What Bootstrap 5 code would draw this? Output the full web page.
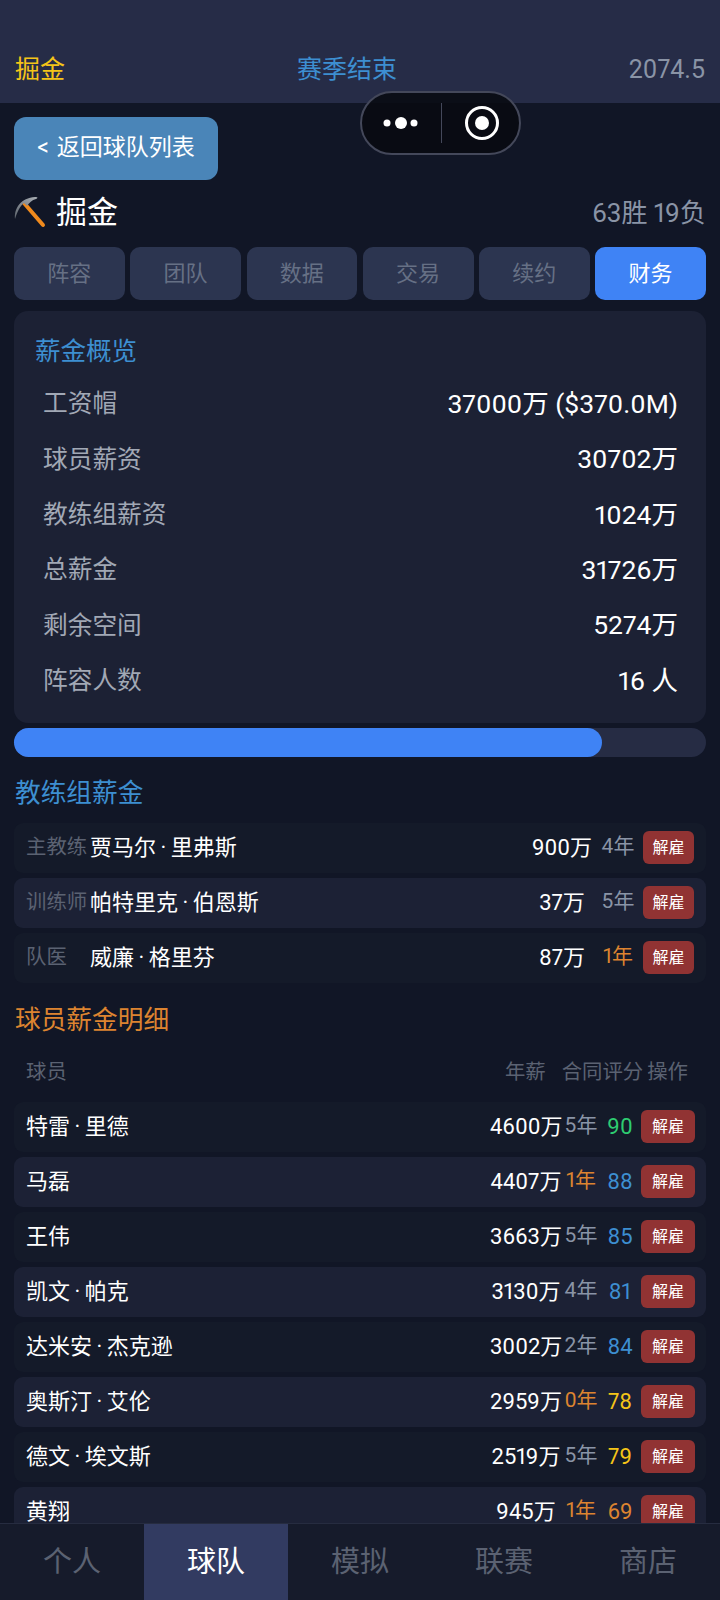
<!DOCTYPE html>
<html lang="zh">
<head>
<meta charset="UTF-8">
<meta name="viewport" content="width=device-width, initial-scale=1">
<title>球队财务</title>
<link href="https://cdn.jsdelivr.net/npm/bootstrap@5.3.0/dist/css/bootstrap.min.css" rel="stylesheet">
<style>
body { background: #111626; color: #fff; font-family: Roboto, "Noto Sans CJK SC", sans-serif; font-variant-numeric: proportional-nums; width: 720px; height: 1600px; overflow: hidden; }
.top-bar { background: #262c47; height: 103px; padding: 0 15px 15px; font-size: 25px; line-height: 36px; }
.tone-gold { color: #f5c518; }
.tone-blue { color: #3d8fd1; }
.tone-gray { color: #8a94a6; }
.tone-orange { color: #dd8430; }
.tone-green { color: #2ecc71; }
.capsule { position: absolute; left: 360px; top: 91px; width: 161px; height: 64px; background: rgba(8, 10, 17, .88); border: 2px solid #44485a; border-radius: 32px; }
.capsule-part { width: 79px; flex: none; }
.capsule-line { width: 1px; height: 40px; background: #44485a; flex: none; }
.page-body { padding: 14px 14px 0; }
.back-btn { width: 204px; height: 63px; background: #4a85b8; border: 0; border-radius: 12px; color: #fff; font-size: 23px; padding: 0; word-spacing: 2px; }
.team-row { height: 67px; }
.team-gap { gap: 10px; }
.team-icon { margin-bottom: 4px; }
.team-name { font-size: 31px; }
.team-record { font-size: 26px; }
.tab-strip { gap: 5.5px; }
.tab-btn { flex: 1 1 0; height: 53px; line-height: 53px; background: #2c3550; color: #667085; font-size: 22px; text-align: center; border-radius: 10px; }
.tab-btn.is-on { background: #3f83f5; color: #fff; }
.money-card { background: #1c2134; border-radius: 14px; height: 412px; margin-top: 11px; padding: 22px 28px 0 21px; }
.money-card h3 { font-size: 25.5px; font-weight: 400; line-height: 36px; margin: 0 0 7px; }
.money-line { height: 55.4px; padding-left: 8px; }
.money-line .lbl { color: #a1a8b5; font-size: 24.7px; }
.money-line .val { font-size: 26.5px; }
.cap-bar { height: 29px; margin-top: 5px; background: #262c44; border-radius: 15px; }
.cap-fill { height: 29px; background: #3f83f5; border-radius: 15px; }
.sec-title { font-size: 25.7px; font-weight: 400; line-height: 36px; margin: 18px 0 12px 1px; }
.sec-title.is-players { margin-top: 19px; margin-bottom: 0; }
.pay-row { height: 50px; margin-bottom: 5px; padding: 0 12px 2px; border-radius: 9px; background: #141a29; font-size: 22px; }
.pay-row.is-alt { background: #1c2135; }
.player-row { padding-right: 11px; }
.name-dot { margin: 0 4.5px; }
.coach-role { width: 64px; font-size: 20.4px; color: #5b6272; white-space: nowrap; }
.fire-tag { background: #913333; color: #fff; font-size: 16px; border-radius: 6px; height: 33px; line-height: 33px; text-align: center; width: 54px; margin-left: 1px; flex: none; }
.coach-row .fire-tag { width: 51px; margin-left: 0; }
.col-pay { width: 72px; text-align: center; white-space: nowrap; }
.col-term { width: 38px; text-align: center; white-space: nowrap; font-size: 21px; }
.col-rate { width: 40px; text-align: center; }
.coach-pay { width: 72px; text-align: center; }
.coach-term { width: 40px; text-align: center; margin-right: 5px; font-size: 21px; }
.head-row { height: 51px; margin-top: 9px; padding: 0 18px 0 12px; font-size: 20.4px; color: #5b6272; }
.player-list { margin-top: 4px; }
.tab-foot { position: fixed; left: 0; right: 0; bottom: 0; height: 77px; background: #161b2b; border-top: 1px solid #262c40; }
.foot-item { flex: 1 1 0; text-align: center; line-height: 76px; font-size: 29px; color: #5b6272; }
.foot-item.is-on { background: #323b61; color: #fff; }
</style>
</head>
<body>

<div class="top-bar d-flex align-items-end justify-content-between">
  <span class="tone-gold">掘金</span>
  <span class="tone-blue">赛季结束</span>
  <span class="tone-gray">2074.5</span>
</div>

<div class="capsule d-flex align-items-center">
  <svg class="capsule-part" height="16" viewBox="0 0 79 16"><circle cx="25" cy="8" r="3.5" fill="#fff"/><circle cx="39" cy="8" r="6" fill="#fff"/><circle cx="52" cy="8" r="3.5" fill="#fff"/></svg>
  <div class="capsule-line"></div>
  <svg class="capsule-part" height="36" viewBox="0 0 79 36"><circle cx="40" cy="18" r="15.5" fill="none" stroke="#fff" stroke-width="3"/><circle cx="40" cy="18" r="7" fill="#fff"/></svg>
</div>

<div class="page-body">
  <button class="back-btn d-block" type="button">&lt; 返回球队列表</button>

  <div class="team-row d-flex align-items-center justify-content-between">
    <div class="d-flex align-items-center team-gap">
      <svg class="team-icon" width="32" height="32" viewBox="0 0 32 32">
        <defs><linearGradient id="pickHead" x1="0" y1="1" x2="1" y2="0"><stop offset="0" stop-color="#5f666e"/><stop offset="1" stop-color="#a8adb3"/></linearGradient></defs>
        <path d="M10 7 L29 29" stroke="#f08a1d" stroke-width="4" stroke-linecap="round"/>
        <path d="M1 23 C0 12 7 2 21 1 C24 1 24 2 22 3 C18 4 15 7 13 10 L10 7 C6 10 3 16 1 23 Z" fill="url(#pickHead)"/>
      </svg>
      <span class="team-name">掘金</span>
    </div>
    <span class="team-record tone-gray">63胜 19负</span>
  </div>

  <div class="d-flex tab-strip">
    <div class="tab-btn">阵容</div>
    <div class="tab-btn">团队</div>
    <div class="tab-btn">数据</div>
    <div class="tab-btn">交易</div>
    <div class="tab-btn">续约</div>
    <div class="tab-btn is-on">财务</div>
  </div>

  <div class="money-card">
    <h3 class="tone-blue">薪金概览</h3>
    <div class="money-line d-flex align-items-center justify-content-between"><span class="lbl">工资帽</span><span class="val">37000万 ($370.0M)</span></div>
    <div class="money-line d-flex align-items-center justify-content-between"><span class="lbl">球员薪资</span><span class="val">30702万</span></div>
    <div class="money-line d-flex align-items-center justify-content-between"><span class="lbl">教练组薪资</span><span class="val">1024万</span></div>
    <div class="money-line d-flex align-items-center justify-content-between"><span class="lbl">总薪金</span><span class="val">31726万</span></div>
    <div class="money-line d-flex align-items-center justify-content-between"><span class="lbl">剩余空间</span><span class="val">5274万</span></div>
    <div class="money-line d-flex align-items-center justify-content-between"><span class="lbl">阵容人数</span><span class="val">16 人</span></div>
  </div>

  <div class="cap-bar"><div class="cap-fill" style="width: 85%"></div></div>

  <h4 class="sec-title tone-blue">教练组薪金</h4>
  <div id="coachList"></div>

  <h4 class="sec-title is-players tone-orange">球员薪金明细</h4>
  <div class="head-row d-flex align-items-center">
    <span class="flex-fill">球员</span>
    <span>年薪</span><span class="ms-3">合同评分</span><span class="ms-1">操作</span>
  </div>
  <div id="playerList" class="player-list"></div>
</div>

<div class="tab-foot d-flex">
  <div class="foot-item">个人</div>
  <div class="foot-item is-on">球队</div>
  <div class="foot-item">模拟</div>
  <div class="foot-item">联赛</div>
  <div class="foot-item">商店</div>
</div>

<script>
  const coaches = [
    ["主教练", "贾马尔·里弗斯", "900万", "4年", "tone-gray"],
    ["训练师", "帕特里克·伯恩斯", "37万", "5年", "tone-gray"],
    ["队医", "威廉·格里芬", "87万", "1年", "tone-orange"]
  ];
  const players = [
    ["特雷·里德", "4600万", "5年", "tone-gray", 90, "tone-green"],
    ["马磊", "4407万", "1年", "tone-orange", 88, "tone-blue"],
    ["王伟", "3663万", "5年", "tone-gray", 85, "tone-blue"],
    ["凯文·帕克", "3130万", "4年", "tone-gray", 81, "tone-blue"],
    ["达米安·杰克逊", "3002万", "2年", "tone-gray", 84, "tone-blue"],
    ["奥斯汀·艾伦", "2959万", "0年", "tone-orange", 78, "tone-gold"],
    ["德文·埃文斯", "2519万", "5年", "tone-gray", 79, "tone-gold"],
    ["黄翔", "945万", "1年", "tone-orange", 69, "tone-orange"]
  ];
  const dotted = name => name.replace("·", '<span class="name-dot">·</span>');
  document.getElementById("coachList").innerHTML = coaches.map((c, i) => `
    <div class="pay-row coach-row d-flex align-items-center ${i % 2 ? "is-alt" : ""}">
      <span class="coach-role">${c[0]}</span>
      <span class="flex-fill">${dotted(c[1])}</span>
      <span class="coach-pay">${c[2]}</span>
      <span class="coach-term ${c[4]}">${c[3]}</span>
      <span class="fire-tag">解雇</span>
    </div>`).join("");
  document.getElementById("playerList").innerHTML = players.map((p, i) => `
    <div class="pay-row player-row d-flex align-items-center ${i % 2 ? "is-alt" : ""}">
      <span class="flex-fill">${dotted(p[0])}</span>
      <span class="col-pay">${p[1]}</span>
      <span class="col-term ${p[3]}">${p[2]}</span>
      <span class="col-rate ${p[5]}">${p[4]}</span>
      <span class="fire-tag">解雇</span>
    </div>`).join("");
</script>
<script src="https://cdn.jsdelivr.net/npm/bootstrap@5.3.0/dist/js/bootstrap.bundle.min.js"></script>
</body>
</html>
